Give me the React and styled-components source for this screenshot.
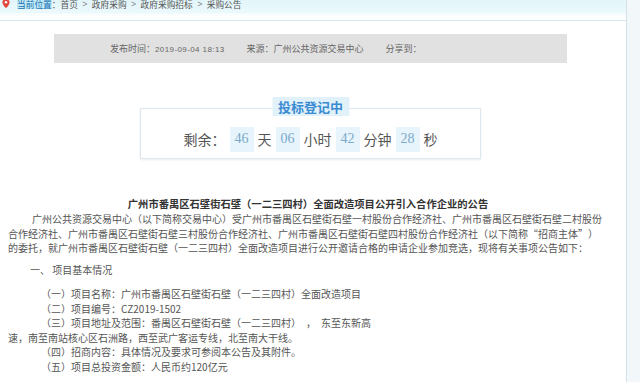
import React from 'react'
import styled, { createGlobalStyle } from 'styled-components'

const GlobalStyle = createGlobalStyle`
    html, body {
        margin: 0;
        padding: 0;
        background: #fff;
        overflow: hidden;
    }
`

const cjk = `"Noto Sans CJK SC", "Liberation Sans", sans-serif`

const Page = styled.div`
    display: flex;
    width: 640px;
    height: 382px;
    overflow: hidden;
    font-family: ${cjk};
`
const Main = styled.div`
    width: 626px;
    display: flex;
    flex-direction: column;
`
const Side = styled.div`
    flex: 1;
    background: #f2f7fa;
    border-left: 1px solid #d2e2ea;
`
const Crumb = styled.div`
    height: 20px;
    display: flex;
    align-items: flex-start;
    padding-left: 2px;
    border-bottom: 1px solid #d4e5eb;
    background: linear-gradient(to bottom, #e2f5fa 0, #ecf9fc 13px, #f9fdfe 14px, #fff 20px);
    font-size: 8.7px;
    line-height: 9px;
    color: #555;
`
const Pin = styled.svg`
    width: 8px;
    height: 9px;
    margin-top: -1px;
`
const Here = styled.span`
    margin-left: 7px;
    color: #1b72b8;
    background: #c2eaf4;
`
const Sep = styled.span`
    display: inline-block;
    width: 14px;
    text-align: center;
    color: #888;
    font-family: "Liberation Sans", sans-serif;
`
const MetaBar = styled.div`
    margin: 13px 0 0 54px;
    width: 513px;
    height: 29px;
    box-sizing: border-box;
    padding-left: 56px;
    display: flex;
    align-items: center;
    gap: 22px;
    background: #e1e1e1;
    font-size: 9px;
    color: #666;
`
const MetaItem = styled.span`
    white-space: nowrap;
`
const Stamp = styled.span`
    font-family: "Liberation Sans", sans-serif;
    font-size: 8px;
    letter-spacing: 0.4px;
`
const Countdown = styled.div`
    position: relative;
    margin: 45px 0 0 140px;
    width: 341px;
    height: 51px;
    box-sizing: border-box;
    padding-top: 11px;
    display: flex;
    justify-content: center;
    align-items: center;
    border: 1px solid #dde8ee;
    box-shadow: 0 1px 2px rgba(0, 0, 0, 0.08);
`
const Status = styled.div`
    position: absolute;
    top: -12px;
    left: 50%;
    transform: translateX(-50%);
    height: 19px;
    line-height: 19px;
    padding: 0 6px;
    background: #e1f1fa;
    color: #3a8bd2;
    font-size: 13px;
    font-weight: bold;
    white-space: nowrap;
`
const Timer = styled.div`
    display: flex;
    align-items: center;
    gap: 4px;
    font-size: 14px;
    color: #555;
`
const Num = styled.span`
    width: 24px;
    height: 25px;
    display: flex;
    align-items: center;
    justify-content: center;
    background: #e8f4fb;
    color: #79aacb;
    font-family: "Liberation Serif", serif;
    font-size: 14px;
`
const Article = styled.div`
    margin-top: 37px;
    padding-left: 8px;
    width: 596px;
    color: #555;
    font-size: 10px;
    line-height: 14.5px;
`
const Title = styled.h1`
    margin: 0;
    padding-left: 4px;
    text-align: center;
    font-size: 10.3px;
    line-height: 16px;
    font-weight: bold;
    color: #333;
`
const Para = styled.p`
    margin: 0;
    text-indent: ${(props) => props.indent || 0}px;
    margin-top: ${(props) => props.top || 0}px;
`
const Quote = styled.span`
    display: inline-block;
    width: 1em;
    text-indent: 0;
    text-align: ${(props) => (props.open ? 'right' : 'left')};
`

const items = [
    '（一）项目名称：广州市番禺区石壁街石壁（一二三四村）全面改造项目',
    '（二）项目编号：CZ2019-1502',
]

const App = () => {
    return (
        <>
            <GlobalStyle />
            <Page>
                <Main>
                    <Crumb>
                        <Pin viewBox="0 0 8 9">
                            <path d="M4 0C1.8 0 0.4 1.5 0.4 3.4 0.4 5.6 4 9 4 9s3.6-3.4 3.6-5.6C7.6 1.5 6.2 0 4 0z" fill="#e2453b" />
                            <circle cx="4" cy="3.3" r="1.3" fill="#fff" />
                        </Pin>
                        <Here>当前位置</Here>
                        <span>：首页</span>
                        <Sep>&gt;</Sep>
                        <span>政府采购</span>
                        <Sep>&gt;</Sep>
                        <span>政府采购招标</span>
                        <Sep>&gt;</Sep>
                        <span>采购公告</span>
                    </Crumb>
                    <MetaBar>
                        <MetaItem>发布时间：<Stamp>2019-09-04 18:13</Stamp></MetaItem>
                        <MetaItem>来源：广州公共资源交易中心</MetaItem>
                        <MetaItem>分享到：</MetaItem>
                    </MetaBar>
                    <Countdown>
                        <Status>投标登记中</Status>
                        <Timer>
                            <span>剩余：</span>
                            <Num>46</Num>
                            <span>天</span>
                            <Num>06</Num>
                            <span>小时</span>
                            <Num>42</Num>
                            <span>分钟</span>
                            <Num>28</Num>
                            <span>秒</span>
                        </Timer>
                    </Countdown>
                    <Article>
                        <Title>广州市番禺区石壁街石壁（一二三四村）全面改造项目公开引入合作企业的公告</Title>
                        <Para indent={24}>
                            广州公共资源交易中心（以下简称交易中心）受广州市番禺区石壁街石壁一村股份合作经济社、广州市番禺区石壁街石壁二村股份合作经济社、广州市番禺区石壁街石壁三村股份合作经济社、广州市番禺区石壁街石壁四村股份合作经济社（以下简称<Quote open>“</Quote>招商主体<Quote>”</Quote>）的委托，就广州市番禺区石壁街石壁（一二三四村）全面改造项目进行公开邀请合格的申请企业参加竞选，现将有关事项公告如下：
                        </Para>
                        <Para indent={22} top={7.5}>一、&nbsp;项目基本情况</Para>
                        <Para indent={33} top={9.5}>{items[0]}</Para>
                        <Para indent={33}>{items[1]}</Para>
                        <Para indent={33}>
                            （三）项目地址及范围：番禺区石壁街石壁（一二三四村）{'\u3000'}，{'\u3000'}东至东新高<br />速，南至南站核心区石洲路，西至武广客运专线，北至南大干线。
                        </Para>
                        <Para indent={33}>（四）招商内容：具体情况及要求可参阅本公告及其附件。</Para>
                        <Para indent={33}>（五）项目总投资金额：人民币约120亿元</Para>
                    </Article>
                </Main>
                <Side />
            </Page>
        </>
    )
}

export default App
